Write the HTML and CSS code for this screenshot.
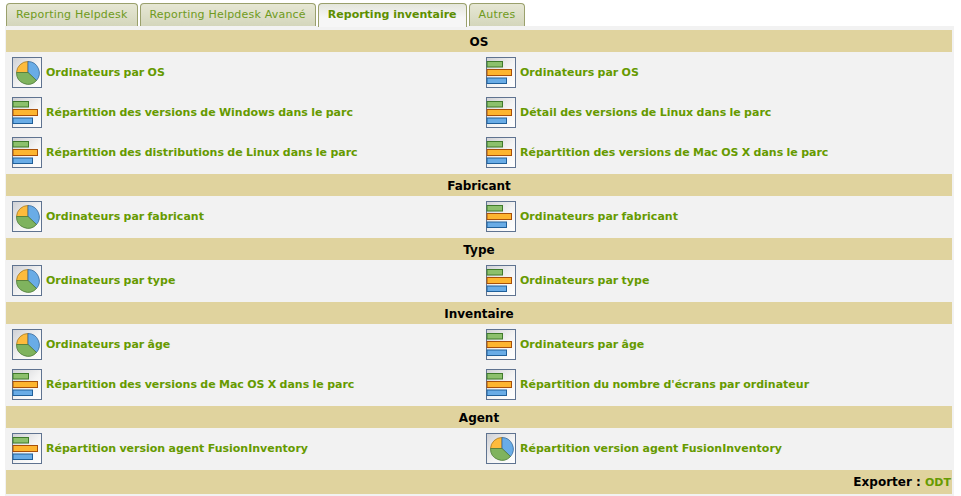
FILE: index.html
```html
<!DOCTYPE html>
<html lang="fr">
<head>
<meta charset="utf-8">
<title>Rapports</title>
<link rel="stylesheet" href="styles.css">
</head>
<body>
<svg class="defs" width="0" height="0" aria-hidden="true">
  <defs>
    <linearGradient id="ibg" x1="0" y1="0" x2="1" y2="1"><stop offset="0" stop-color="#cfd0d4"/><stop offset=".55" stop-color="#f4f4f4"/><stop offset="1" stop-color="#ffffff"/></linearGradient>
    <symbol id="pie" viewBox="0 0 30 31">
      <rect x=".5" y=".5" width="29" height="30" fill="url(#ibg)" stroke="#5f7390"/>
      <path d="M16 15.500V4.500A11.500 11.500 0 0 0 4.500 15.500Z" fill="#fdbb3c" stroke="#a87a20" stroke-opacity=".8"/>
      <path d="M16 15.500V4.500A11.500 11.500 0 0 1 24.500 23.500Z" fill="#69ace6" stroke="#35689a" stroke-opacity=".8"/>
      <path d="M16 15.500L24.500 23.500A11.500 11.500 0 0 1 4.500 15.500Z" fill="#7fb35e" stroke="#4c7a37" stroke-opacity=".8"/>
    </symbol>
    <symbol id="bar" viewBox="0 0 30 31">
      <rect x=".5" y=".5" width="29" height="30" fill="url(#ibg)" stroke="#5f7390"/>
      <rect x="1" y="4.500" width="15.500" height="5.500" fill="#8cc06c" stroke="#3f7a2a"/>
      <rect x="1" y="12.500" width="24.500" height="6" fill="#fdb52f" stroke="#a8500a"/>
      <rect x="1" y="21" width="19.500" height="5.500" fill="#69ace6" stroke="#20609a"/>
    </symbol>
  </defs>
</svg>
<nav class="tabs">
  <a class="tab">Reporting Helpdesk</a>
  <a class="tab">Reporting Helpdesk Avancé</a>
  <a class="tab active">Reporting inventaire</a>
  <a class="tab">Autres</a>
</nav>
<main class="panel">
  <h2 class="head">OS</h2>
  <div class="row">
    <a class="item"><svg class="ico"><use href="#pie"/></svg>Ordinateurs par OS</a>
    <a class="item"><svg class="ico"><use href="#bar"/></svg>Ordinateurs par OS</a>
  </div>
  <div class="row">
    <a class="item"><svg class="ico"><use href="#bar"/></svg>Répartition des versions de Windows dans le parc</a>
    <a class="item"><svg class="ico"><use href="#bar"/></svg>Détail des versions de Linux dans le parc</a>
  </div>
  <div class="row">
    <a class="item"><svg class="ico"><use href="#bar"/></svg>Répartition des distributions de Linux dans le parc</a>
    <a class="item"><svg class="ico"><use href="#bar"/></svg>Répartition des versions de Mac OS X dans le parc</a>
  </div>
  <h2 class="head">Fabricant</h2>
  <div class="row">
    <a class="item"><svg class="ico"><use href="#pie"/></svg>Ordinateurs par fabricant</a>
    <a class="item"><svg class="ico"><use href="#bar"/></svg>Ordinateurs par fabricant</a>
  </div>
  <h2 class="head">Type</h2>
  <div class="row">
    <a class="item"><svg class="ico"><use href="#pie"/></svg>Ordinateurs par type</a>
    <a class="item"><svg class="ico"><use href="#bar"/></svg>Ordinateurs par type</a>
  </div>
  <h2 class="head">Inventaire</h2>
  <div class="row">
    <a class="item"><svg class="ico"><use href="#pie"/></svg>Ordinateurs par âge</a>
    <a class="item"><svg class="ico"><use href="#bar"/></svg>Ordinateurs par âge</a>
  </div>
  <div class="row">
    <a class="item"><svg class="ico"><use href="#bar"/></svg>Répartition des versions de Mac OS X dans le parc</a>
    <a class="item"><svg class="ico"><use href="#bar"/></svg>Répartition du nombre d'écrans par ordinateur</a>
  </div>
  <h2 class="head">Agent</h2>
  <div class="row">
    <a class="item"><svg class="ico"><use href="#bar"/></svg>Répartition version agent FusionInventory</a>
    <a class="item"><svg class="ico"><use href="#pie"/></svg>Répartition version agent FusionInventory</a>
  </div>
  <div class="export">Exporter : <a class="odt">ODT</a></div>
</main>
</body>
</html>
```
FILE: styles.css
```css
html, body { margin: 0; padding: 0; background: #fff; }
body { font-family: "DejaVu Sans", sans-serif; font-size: 11px; height: 496px; overflow: hidden; }
.defs { position: absolute; }
.tabs { display: flex; gap: 2px; padding: 3px 0 0 6px; height: 23px; }
.tab { display: block; height: 22px; line-height: 22px; padding: 0 9px; color: #6f9a20; background: linear-gradient(#e6e7d4, #d4d6bc); border: 1px solid #9aa06c; border-bottom: 0; border-radius: 4px 4px 0 0; letter-spacing: .2px; }
.tab.active { background: linear-gradient(#e4e6dc, #f6f6f6 60%); color: #5e8f00; font-weight: bold; height: 23px; letter-spacing: 0; }
.panel { display: flex; flex-direction: column; margin-left: 5px; width: 949px; background: #f2f2f2; padding-top: 4px; height: 470px; box-sizing: border-box; }
.head { margin: 2px 2px 0 1px; height: 22px; line-height: 24px; background: #e0d39e; color: #000; font-size: 12px; font-weight: bold; text-align: center; }
.head:first-child { margin-top: 0; }
.row { display: grid; grid-template-columns: 474px 1fr; height: 40px; }
.item { display: flex; align-items: center; gap: 4px; padding-left: 7px; color: #669a00; font-weight: bold; word-spacing: -.5px; }
.ico { width: 30px; height: 31px; flex: none; }
.export { margin: 2px 2px 0 1px; height: 24px; line-height: 24px; background: #e0d39e; color: #000; font-size: 12px; font-weight: bold; text-align: right; padding-right: 1px; }
.odt { color: #669a00; font-size: 11px; }
```
